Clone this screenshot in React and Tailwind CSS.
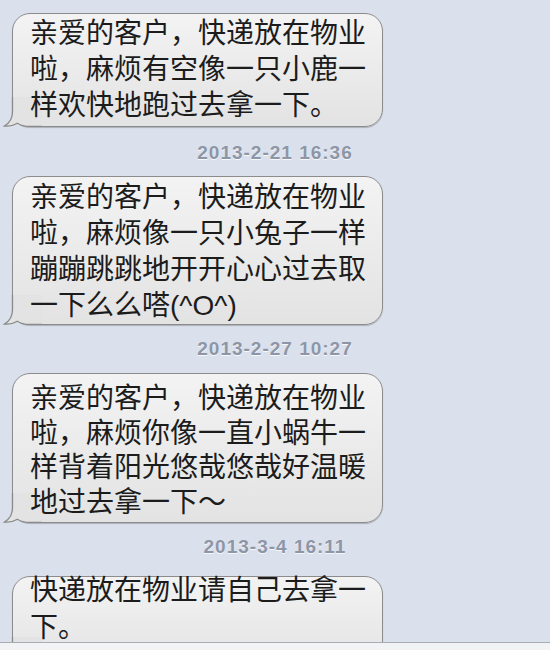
import React from "react";

const CJK = { fontFamily: '"Liberation Sans", "Noto Sans CJK SC", sans-serif' };

function Tail() {
  return (
    <svg
      className="absolute left-[-11px] bottom-[-1px]"
      width="40"
      height="30"
      viewBox="0 0 40 30"
    >
      <path
        d="M10.5 0 L10.5 15 C10.5 21 7.5 26 2.5 29 C7 29.5 11.5 28.5 15.5 26.2 C18.5 28.5 22 29.5 28 29.5 L40 29.5 L40 0 Z"
        fill="#e3e3e3"
        stroke="none"
      />
      <path
        d="M10.5 0 L10.5 15 C10.5 21 7.5 26 2.5 29 C7 29.5 11.5 28.5 15.5 26.2 C18.5 28.5 22 29.5 28 29.5 L40 29.5"
        fill="none"
        stroke="#8a8a8a"
        strokeWidth="1.3"
      />
    </svg>
  );
}

function Bubble({ lines, className = "", textClass = "" }) {
  return (
    <div
      className={
        "relative ml-[12px] w-[371px] shrink-0 rounded-[18px] border border-[#8c8c8c] bg-gradient-to-b from-[#f3f3f3] to-[#e3e3e3] pl-[17px] pr-[10px] shadow-[0_1px_1px_rgba(0,0,0,0.22)] " +
        className
      }
    >
      <Tail />
      <div
        className={
          "relative z-10 text-[28px] text-[#1c1c1c] whitespace-nowrap " +
          textClass
        }
        style={CJK}
      >
        {lines.map((l, i) => (
          <div key={i}>{l}</div>
        ))}
      </div>
    </div>
  );
}

function Stamp({ text, className = "" }) {
  return (
    <div
      className={
        "h-[22px] shrink-0 text-center text-[19px] leading-[22px] font-bold tracking-[1px] text-[#8d96a6] [text-shadow:0_1px_0_rgba(255,255,255,0.8)] " +
        className
      }
      style={{ fontFamily: '"Liberation Sans", Arial, sans-serif' }}
    >
      {text}
    </div>
  );
}

export default function App() {
  return (
    <div className="flex h-[650px] w-[550px] flex-col overflow-hidden bg-[#dbe1ec]">
      <div className="flex min-h-0 flex-1 flex-col overflow-hidden pt-[13px]">
        <Bubble
          className="pt-[2px] pb-[2px]"
          textClass="leading-[36px]"
          lines={[
            "亲爱的客户，快递放在物业",
            "啦，麻烦有空像一只小鹿一",
            "样欢快地跑过去拿一下。",
          ]}
        />
        <Stamp text="2013-2-21 16:36" className="mt-[15px] mb-[12px]" />
        <Bubble
          className="pt-[3px] pb-[0px]"
          textClass="leading-[36px]"
          lines={[
            "亲爱的客户，快递放在物业",
            "啦，麻烦像一只小兔子一样",
            "蹦蹦跳跳地开开心心过去取",
            "一下么么嗒(^O^)",
          ]}
        />
        <Stamp text="2013-2-27 10:27" className="mt-[13px] mb-[13px]" />
        <Bubble
          className="pt-[8px] pb-[2px]"
          textClass="leading-[34.5px]"
          lines={[
            "亲爱的客户，快递放在物业",
            "啦，麻烦你像一直小蜗牛一",
            "样背着阳光悠哉悠哉好温暖",
            "地过去拿一下～",
          ]}
        />
        <Stamp text="2013-3-4 16:11" className="mt-[13px] mb-[18px]" />
        <Bubble
          className="pt-0 pb-[20px]"
          textClass="leading-[37px] -mt-[5px]"
          lines={["快递放在物业请自己去拿一", "下。"]}
        />
      </div>
      <div className="h-[8px] shrink-0 border-t border-[#a9acb2] bg-[#f2f3f5]" />
    </div>
  );
}
